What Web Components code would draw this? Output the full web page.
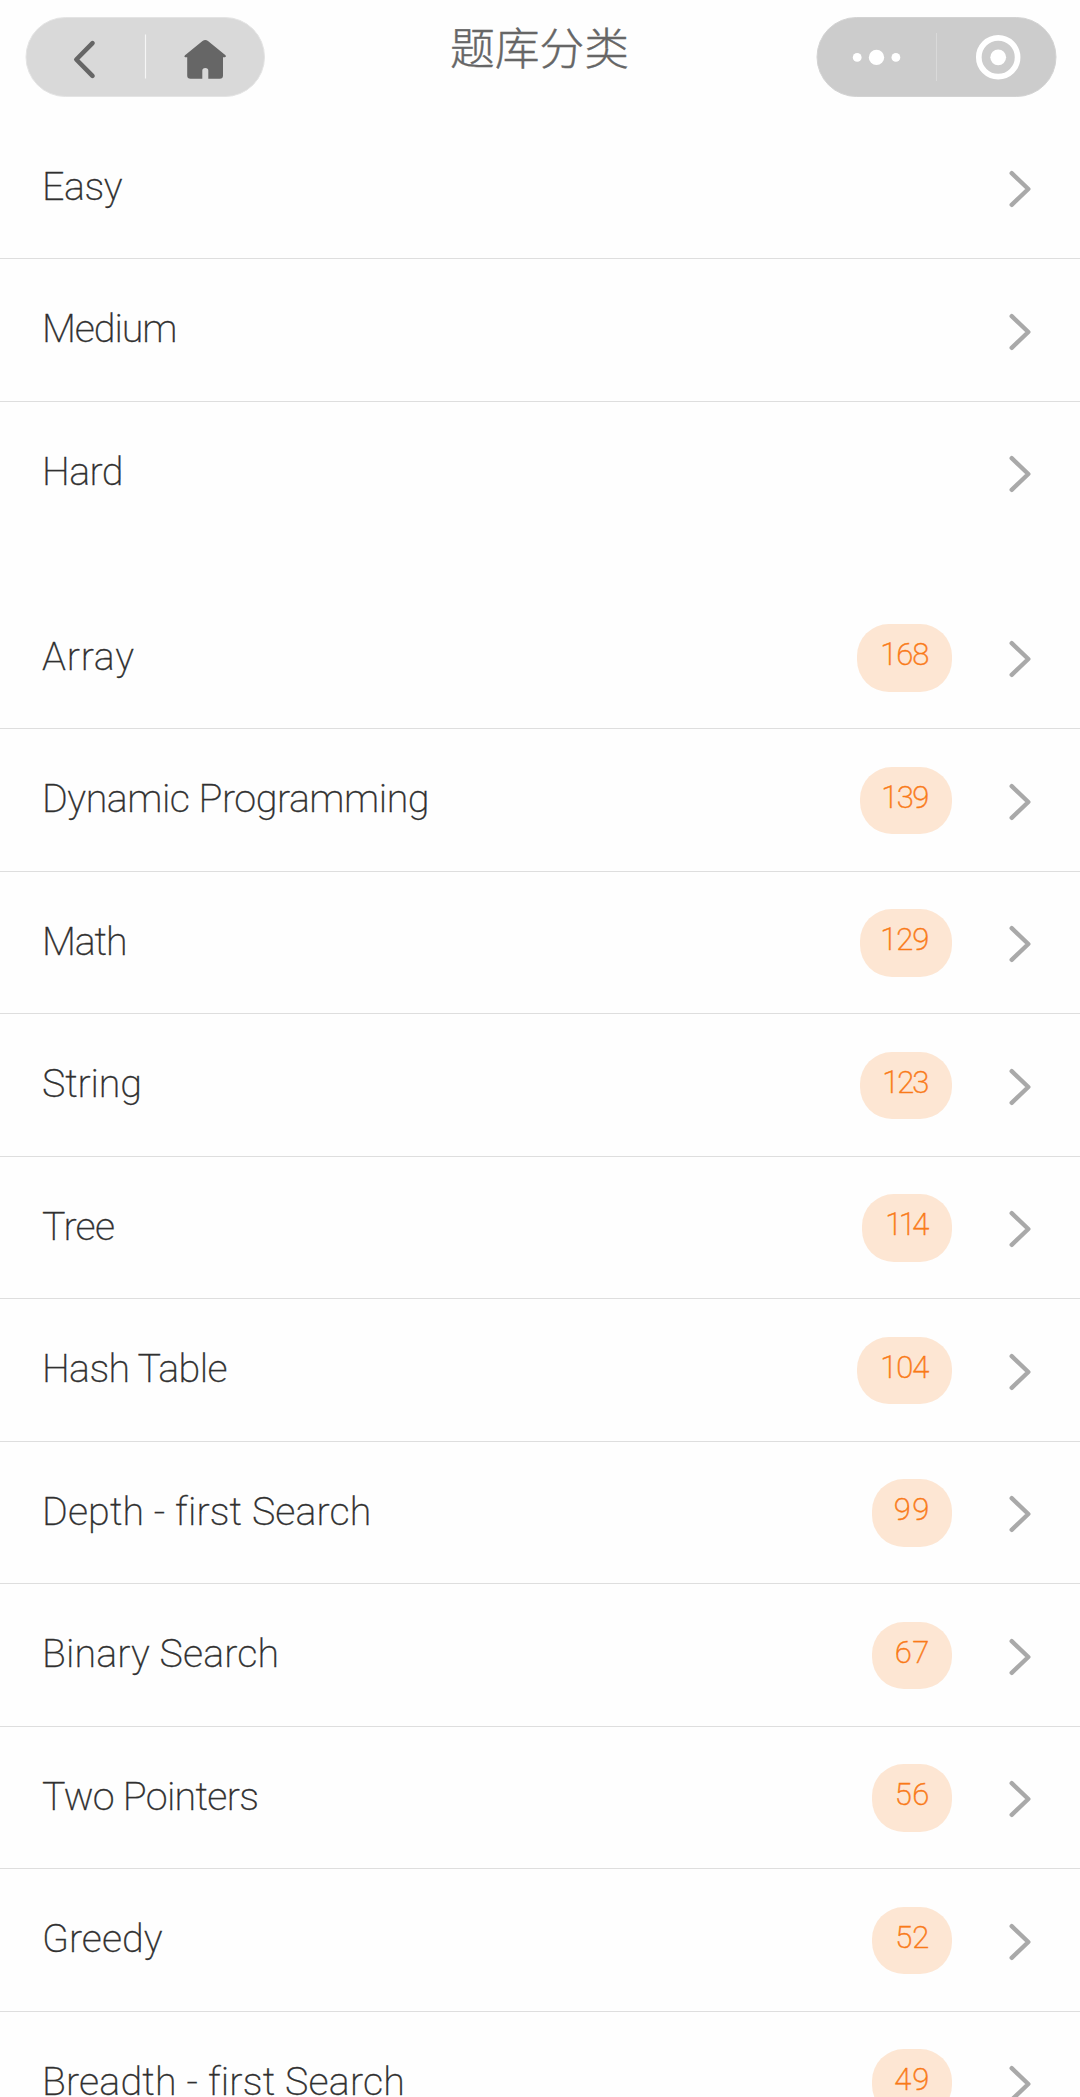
<!DOCTYPE html>
<html lang="zh-CN">
<head>
<meta charset="utf-8">
<title>题库分类</title>
<style>
html,body{margin:0;background:#fefefe}
body{height:2097px;overflow:hidden;font-family:Roboto,"Noto Sans CJK SC",sans-serif}
</style>
</head>
<body>
<category-page></category-page>
<script>
class NavHeader extends HTMLElement{
  connectedCallback(){
    this.attachShadow({mode:'open'}).innerHTML=`<style>
      :host{display:flex;justify-content:space-between;align-items:flex-start;height:116px;padding:17px 23px 0 25px;box-sizing:border-box}
      svg{display:block;flex:none}
      h1{margin:-1px 3px 0 0;font:300 44.8px/60px "Noto Sans CJK SC",sans-serif;color:#666;-webkit-text-stroke:.4px #666}
    </style>
    <svg width="241" height="81" viewBox="25 17 241 81">
      <rect x="26" y="17.5" width="238.5" height="79" rx="39.5" fill="#d9d9d9" stroke="#e4e4e4"/>
      <path d="M145.5 34.5V78.5" stroke="#f6f6f6" stroke-width="1.2"/>
      <path d="M92.5 43.2L76.3 59.5L92.5 75.8" fill="none" stroke="#666" stroke-width="4.6" stroke-linecap="round" stroke-linejoin="round"/>
      <path d="M202.5 41Q205.3 39 208 41L225.5 55.2Q227 57.5 223 57.3V75.5Q223 78.8 219.7 78.8H208.3V70.5Q208.3 68 205.3 68Q202.3 68 202.3 70.5V78.8H190.5Q187.2 78.8 187.2 75.5V57.3Q183 57.5 185 55.2Z" fill="#666"/>
    </svg>
    <h1><slot></slot></h1>
    <svg width="241" height="81" viewBox="816 17 241 81">
      <rect x="817" y="17.5" width="239" height="79" rx="39.5" fill="#ccc" stroke="#d3d3d3"/>
      <path d="M936.5 33V81" stroke="#d9d9d9"/>
      <g fill="#fff"><circle cx="857.2" cy="57.4" r="4.4"/><circle cx="876.5" cy="57.4" r="7.7"/><circle cx="895.9" cy="57.4" r="4.4"/><circle cx="998.2" cy="57.3" r="7.9"/></g>
      <circle cx="998.2" cy="57.3" r="19.4" fill="none" stroke="#fff" stroke-width="5.7"/>
    </svg>`;
  }
}
/* Single line of text whose tracking is adjusted to fill the "span" attribute, in pixels. */
class TrackedText extends HTMLElement{
  connectedCallback(){
    this.attachShadow({mode:'open'}).innerHTML=`<style>:host{display:block;white-space:nowrap}span{display:inline-block}</style><span>${this.getAttribute('text')}</span>`;
    const s=this.shadowRoot.querySelector('span');
    const target=+this.getAttribute('span'),n=s.textContent.length;
    s.style.letterSpacing=(target-s.getBoundingClientRect().width)/(n-1)+'px';
    s.style.marginRight=-parseFloat(s.style.letterSpacing)+'px';
  }
}
class CountBadge extends HTMLElement{
  connectedCallback(){
    this.attachShadow({mode:'open'}).innerHTML=`<style>
      :host{display:flex;justify-content:flex-end;box-sizing:border-box;height:67.6px;margin-top:37.8px;border-radius:32px;background:#fde6d3;color:#f97a18;padding:12.8px 23px 0 0;width:${this.getAttribute('width')}px}
      tracked-text{font:200 31px/36px Roboto,sans-serif;-webkit-text-stroke:.45px currentColor}
    </style><tracked-text text="${this.getAttribute('value')}" span="${this.getAttribute('span')}"></tracked-text>`;
  }
}
class CategoryRow extends HTMLElement{
  connectedCallback(){
    const a=k=>this.getAttribute(k);
    this.attachShadow({mode:'open'}).innerHTML=`<style>
      :host{display:flex;align-items:flex-start;height:142.5px;box-sizing:border-box;border-bottom:1px solid #dedede;padding:0 47px 0 42px}
      :host([last]){border-bottom-color:transparent}
      .name{flex:1;margin-top:47.4px;font:200 39.4px/46px Roboto,sans-serif;color:#303030;-webkit-text-stroke:.3px currentColor}
      svg{display:block;flex:none;margin:53.9px 0 0 55.8px}
    </style>
    <tracked-text class="name" text="${a('name')}" span="${a('span')}"></tracked-text>
    ${a('count')?`<count-badge value="${a('count')}" width="${a('bw')}" span="${a('bs')}"></count-badge>`:''}
    <svg width="25" height="40" viewBox="0 0 25 40"><path d="M3.7 3.2L20.3 19L3.7 34.8" fill="none" stroke="#a9a9a9" stroke-width="4.4" stroke-linecap="round" stroke-linejoin="round"/></svg>`;
  }
}
class CategoryPage extends HTMLElement{
  connectedCallback(){
    const levels=[['Easy',80.5],['Medium',135.5],['Hard',81.5]];
    const topics=[['Array',92,168,95.4,49],['Dynamic Programming',387.5,139,92.7,48],['Math',85.5,129,92.7,49],['String',100,123,92.7,47],['Tree',73,114,90.3,44],['Hash Table',185.5,104,95.4,49],['Depth - first Search',329,99,80.5,35.5],['Binary Search',237,67,80.5,34.5],['Two Pointers',217,56,80.5,34.5],['Greedy',120.5,52,80.5,34],['Breadth - first Search',362.5,49,80.5,35]];
    const row=([n,s,c,w,t],i,l)=>`<category-row name="${n}" span="${s}" ${c?`count="${c}" bw="${w}" bs="${t}"`:''} ${i===l.length-1?'last':''}></category-row>`;
    this.attachShadow({mode:'open'}).innerHTML=`<style>
      :host{display:flex;flex-direction:column;width:1080px;height:2097px;overflow:hidden}
      nav-header,section{flex:none}
      nav-header{margin-bottom:.6px}
      section + section{margin-top:42.5px}
    </style><nav-header>题库分类</nav-header><section>${levels.map(row).join('')}</section><section>${topics.map(row).join('')}</section>`;
  }
}
customElements.define('nav-header',NavHeader);
customElements.define('tracked-text',TrackedText);
customElements.define('count-badge',CountBadge);
customElements.define('category-row',CategoryRow);
customElements.define('category-page',CategoryPage);
</script>
</body>
</html>
